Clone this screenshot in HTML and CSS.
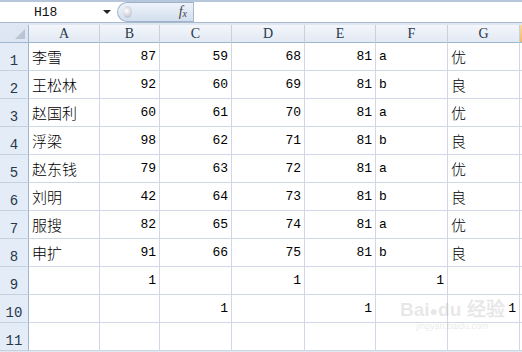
FILE: index.html
```html
<!DOCTYPE html>
<html lang="zh-CN">

<head>
    <meta charset="UTF-8">
    <title>Sheet1</title>
    <link rel="stylesheet" href="styles.css">
</head>

<body>
    <div class="formula-bar">
        <div class="name-box">
            <span class="name-text">H18</span>
            <span class="name-arrow"></span>
        </div>
        <div class="fx-pill">
            <span class="knob"></span>
            <span class="fx">f<sub>x</sub></span>
        </div>
        <div class="formula-input"></div>
    </div>

    <div class="sheet">
        <div class="hd corner"><span class="corner-tri"></span></div>
        <div class="hd col">A</div>
        <div class="hd col">B</div>
        <div class="hd col">C</div>
        <div class="hd col">D</div>
        <div class="hd col">E</div>
        <div class="hd col">F</div>
        <div class="hd col">G</div>
        <div class="hd col sel"></div>

        <div class="hd row">1</div>
        <div class="c txt">李雪</div><div class="c num">87</div><div class="c num">59</div><div class="c num">68</div><div class="c num">81</div><div class="c lat">a</div><div class="c txt">优</div><div class="c"></div>

        <div class="hd row">2</div>
        <div class="c txt">王松林</div><div class="c num">92</div><div class="c num">60</div><div class="c num">69</div><div class="c num">81</div><div class="c lat">b</div><div class="c txt">良</div><div class="c"></div>

        <div class="hd row">3</div>
        <div class="c txt">赵国利</div><div class="c num">60</div><div class="c num">61</div><div class="c num">70</div><div class="c num">81</div><div class="c lat">a</div><div class="c txt">优</div><div class="c"></div>

        <div class="hd row">4</div>
        <div class="c txt">浮梁</div><div class="c num">98</div><div class="c num">62</div><div class="c num">71</div><div class="c num">81</div><div class="c lat">b</div><div class="c txt">良</div><div class="c"></div>

        <div class="hd row">5</div>
        <div class="c txt">赵东钱</div><div class="c num">79</div><div class="c num">63</div><div class="c num">72</div><div class="c num">81</div><div class="c lat">a</div><div class="c txt">优</div><div class="c"></div>

        <div class="hd row">6</div>
        <div class="c txt">刘明</div><div class="c num">42</div><div class="c num">64</div><div class="c num">73</div><div class="c num">81</div><div class="c lat">b</div><div class="c txt">良</div><div class="c"></div>

        <div class="hd row">7</div>
        <div class="c txt">服搜</div><div class="c num">82</div><div class="c num">65</div><div class="c num">74</div><div class="c num">81</div><div class="c lat">a</div><div class="c txt">优</div><div class="c"></div>

        <div class="hd row">8</div>
        <div class="c txt">申扩</div><div class="c num">91</div><div class="c num">66</div><div class="c num">75</div><div class="c num">81</div><div class="c lat">b</div><div class="c txt">良</div><div class="c"></div>

        <div class="hd row">9</div>
        <div class="c"></div><div class="c num">1</div><div class="c"></div><div class="c num">1</div><div class="c"></div><div class="c num">1</div><div class="c"></div><div class="c"></div>

        <div class="hd row">10</div>
        <div class="c"></div><div class="c"></div><div class="c num">1</div><div class="c"></div><div class="c num">1</div><div class="c"></div><div class="c num">1</div><div class="c"></div>

        <div class="hd row">11</div>
        <div class="c"></div><div class="c"></div><div class="c"></div><div class="c"></div><div class="c"></div><div class="c"></div><div class="c"></div><div class="c"></div>
    </div>

    <!-- watermark -->
    <div class="watermark">
        <div class="wm-logo">Bai<span class="paw">&#9679;</span>du 经验</div>
        <div class="wm-url">jingyan.baidu.com</div>
    </div>
</body>

</html>
```

FILE: styles.css
```css
body {
    margin: 0;
    width: 522px;
    height: 352px;
    overflow: hidden;
    background-color: #dfe7f2;
    font-family: "Noto Sans CJK SC", sans-serif;
    position: relative;
}

/* formula bar */
.formula-bar {
    display: flex;
    border-top: 2px solid #b6c6db;
    border-bottom: 1px solid #a9b9cc;
    background-color: white;
    box-sizing: border-box;
    height: 23px;
}

.name-box {
    width: 117px;
    display: flex;
    align-items: center;
    box-sizing: border-box;
}

.name-text {
    font-family: "Liberation Mono", monospace;
    font-size: 13px;
    color: #111;
    margin-left: 34px;
    flex: 1;
}

.name-arrow {
    width: 0;
    height: 0;
    border-left: 4px solid transparent;
    border-right: 4px solid transparent;
    border-top: 4px solid #222;
    margin-right: 6px;
}

.fx-pill {
    width: 76px;
    display: flex;
    align-items: center;
    justify-content: space-between;
    border-radius: 10px 0 0 10px;
    border: 1px solid #9fb2c9;
    border-right: none;
    background: linear-gradient(#eef3fa, #d3dfee);
    box-sizing: border-box;
    padding: 0 6px 0 5px;
}

.knob {
    width: 9px;
    height: 12px;
    border-radius: 50%;
    background: radial-gradient(circle at 40% 40%, #fff, #a9b1bb);
}

.fx {
    font-family: "Liberation Serif", serif;
    font-style: italic;
    font-size: 14px;
    color: #444;
}

.fx sub {
    font-size: 10px;
    vertical-align: -1px;
}

.formula-input {
    flex: 1;
    border-left: 1px solid #a9b9cc;
}

/* grid */
.sheet {
    margin-top: 2px;
    display: grid;
    grid-template-columns: 29px 71px 60px 72px 73px 71px 72px 72px 2px;
    grid-template-rows: 18px repeat(11, 28px);
    background-color: white;
}

.hd {
    background: linear-gradient(#f3f6fb, #e2e9f3);
    color: #27384d;
    font-family: "Liberation Serif", serif;
    font-size: 14px;
    box-sizing: border-box;
    border-right: 1px solid #c5d1df;
    border-bottom: 1px solid #9eb6ce;
}

.col {
    display: flex;
    align-items: center;
    justify-content: center;
    padding-top: 1px;
}

.col.sel {
    background: linear-gradient(#f9d99f, #f1ba62);
    border-right: none;
}

.row {
    background: #e4ecf7;
    display: flex;
    align-items: flex-end;
    justify-content: center;
    line-height: 14px;
    padding-bottom: 2px;
    border-right: 1px solid #9eb6ce;
    border-bottom: 1px solid #c5d1df;
    font-family: "Liberation Mono", monospace;
    font-size: 14px;
}

.corner {
    background: #dde6f2;
    border-right: 1px solid #9eb6ce;
    position: relative;
}

.corner-tri {
    position: absolute;
    right: 3px;
    bottom: 3px;
    width: 0;
    height: 0;
    border-left: 10px solid transparent;
    border-bottom: 10px solid #b9c5d4;
}

.c {
    box-sizing: border-box;
    border-right: 1px solid #d0d7e5;
    border-bottom: 1px solid #d0d7e5;
    display: flex;
    align-items: center;
    padding: 0 3px;
    color: #000;
    white-space: nowrap;
}

.txt {
    font-size: 15px;
    font-weight: 300;
}

.num {
    justify-content: flex-end;
    font-family: "Liberation Mono", monospace;
    font-size: 13px;
}

.lat {
    font-family: "Liberation Mono", monospace;
    font-size: 13px;
}

.watermark {
    position: absolute;
    left: 400px;
    top: 300px;
    color: rgba(170, 170, 170, 0.28);
    text-align: center;
}

.wm-logo {
    font-family: "Liberation Sans", sans-serif;
    font-weight: bold;
    font-size: 19px;
    line-height: 20px;
}

.paw {
    font-size: 14px;
}

.wm-url {
    font-family: "Liberation Sans", sans-serif;
    font-size: 9px;
}
```
